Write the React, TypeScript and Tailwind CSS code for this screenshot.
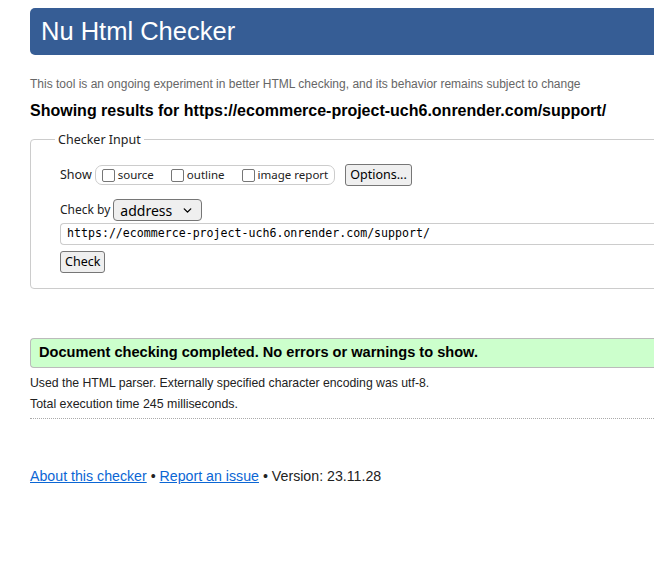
import { ChevronDown } from "lucide-react";

function Checkbox({ label }: { label: string }) {
  return (
    <label className="flex items-center gap-[3px]">
      <span className="inline-block h-[13px] w-[13px] rounded-[2px] border border-[#767676] bg-white" />
      <span>{label}</span>
    </label>
  );
}

function Button({ children }: { children: React.ReactNode }) {
  return (
    <span className="inline-flex h-[22px] items-center rounded-[3px] border border-[#767676] bg-[#efefef] px-[4px] text-[12.5px] text-black">
      {children}
    </span>
  );
}

export default function App() {
  return (
    <div className="w-full overflow-hidden bg-white font-['Liberation_Sans',Arial,sans-serif] text-[#222]">
      <div className="ml-[30px] w-[700px] pt-2">
        <h1 className="flex h-[47px] items-center rounded-l-[5px] bg-[#365d95] pl-[11px] text-[25.5px] text-white">
          Nu Html Checker
        </h1>

        <p className="mt-[22px] text-[12px] leading-[15px] text-[#666]">
          This tool is an ongoing experiment in better HTML checking, and its behavior remains subject to change
        </p>
        <h2 className="mt-[9px] text-[16px] font-bold leading-5 text-black">
          Showing results for https://ecommerce-project-uch6.onrender.com/support/
        </h2>

        <fieldset className="mt-[11px] rounded-[4px] border border-[#ccc] pb-[15px] pl-[29px] pt-[17px] font-['Noto_Sans',sans-serif] text-[12px] text-[#222]">
          <legend className="-ml-[5px] px-[3px] text-[12.5px] leading-[15px]">Checker Input</legend>

          <div className="flex items-center">
            <span className="mr-[3px] text-[12.5px]">Show</span>
            <div className="flex h-[20px] items-center gap-[17px] rounded-[7px] border border-[#ccc] pl-[6px] pr-[6px] text-[11.5px]">
              <Checkbox label="source" />
              <Checkbox label="outline" />
              <Checkbox label="image report" />
            </div>
            <span className="ml-[10px]">
              <Button>Options...</Button>
            </span>
          </div>

          <div className="mt-[13px] flex items-center">
            <span className="mr-[3px] text-[12px]">Check by</span>
            <span className="flex h-[22px] w-[89px] items-center justify-between rounded-[4px] border border-[#767676] bg-[#efefef] pl-[6px] pr-[7px] text-[14px] text-black">
              address
              <ChevronDown className="h-[13px] w-[13px]" strokeWidth={2.5} />
            </span>
          </div>

          <div className="mt-[2px] flex h-[22px] items-center rounded-l-[4px] border border-r-0 border-[#ccc] pl-[6px] font-['DejaVu_Sans_Mono',monospace] text-[11.6px] text-black">
            https://ecommerce-project-uch6.onrender.com/support/
          </div>

          <div className="mt-[6px]">
            <Button>Check</Button>
          </div>
        </fieldset>

        <div className="mt-[49px] flex h-[30px] items-center rounded-l-[4px] border border-r-0 border-[#bbb] bg-[#ccffcc] pl-[8px] text-[14.6px] font-bold text-black">
          Document checking completed. No errors or warnings to show.
        </div>

        <p className="mt-[8px] text-[12.25px] leading-[15px] text-[#222]">
          Used the HTML parser. Externally specified character encoding was utf-8.
        </p>
        <p className="mt-[6px] text-[12.4px] leading-[15px] text-[#222]">Total execution time 245 milliseconds.</p>
        <div className="mt-[6px] border-t border-dotted border-[#aaa]" />

        <p className="mt-[47px] text-[14.2px] text-[#222]">
          <a href="#" className="text-[#0b66d4] underline">
            About this checker
          </a>{" "}
          •{" "}
          <a href="#" className="text-[#0b66d4] underline">
            Report an issue
          </a>{" "}
          • Version: 23.11.28
        </p>
        <div className="h-[70px]" />
      </div>
    </div>
  );
}
